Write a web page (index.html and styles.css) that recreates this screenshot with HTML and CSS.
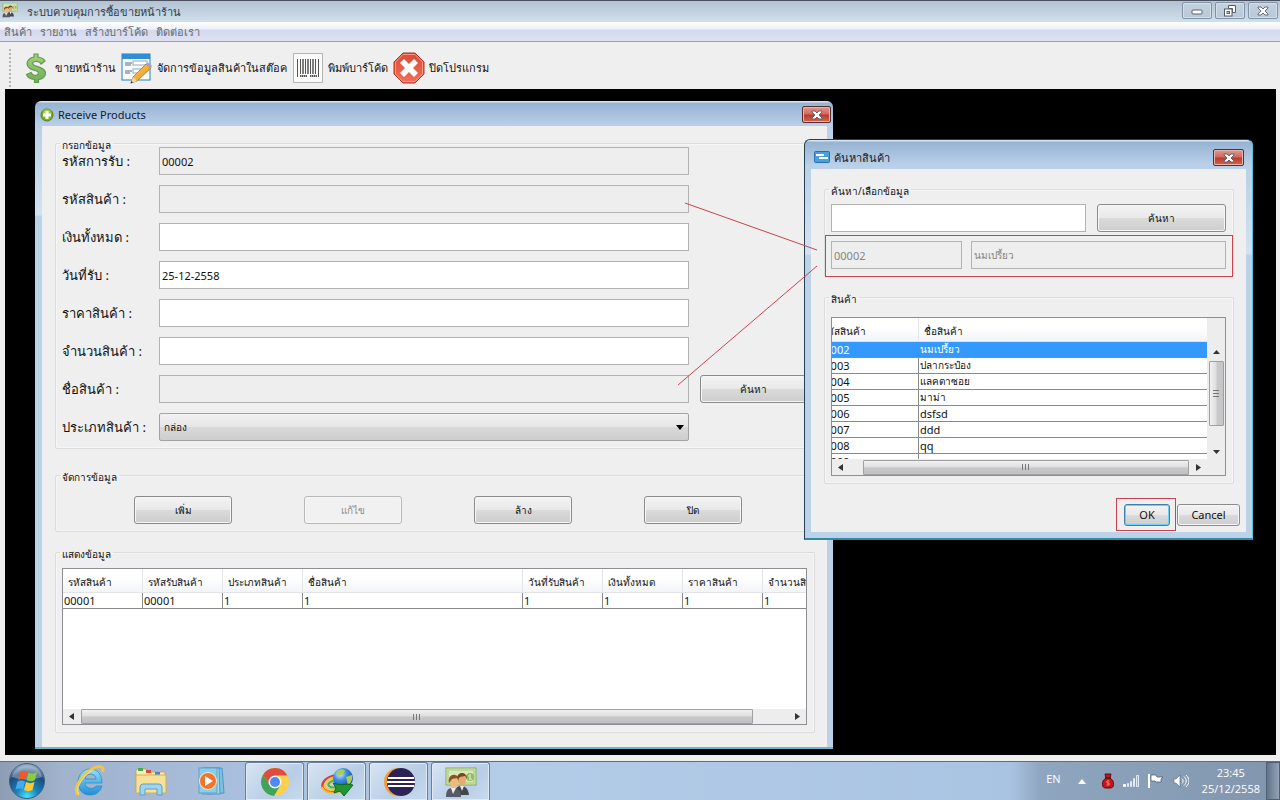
FILE: index.html
```html
<!DOCTYPE html>
<html lang="th">
<head>
<meta charset="utf-8">
<title>ระบบควบคุมการซื้อขายหน้าร้าน</title>
<link rel="stylesheet" href="styles.css">
</head>
<body>
<svg class="defs" aria-hidden="true">
  <defs>
    <linearGradient id="gGreen" x1="0" y1="0" x2="0" y2="1"><stop offset="0" stop-color="#a5cf7c"/><stop offset="1" stop-color="#6fae5b"/></linearGradient>
    <linearGradient id="gRed" x1="0" y1="0" x2="0" y2="1"><stop offset="0" stop-color="#dc4a36"/><stop offset="1" stop-color="#f0705a"/></linearGradient>
    <linearGradient id="gPencil" x1="0" y1="0" x2="1" y2="1"><stop offset="0" stop-color="#ffd35a"/><stop offset="1" stop-color="#e08e1c"/></linearGradient>
    <radialGradient id="gOrb" cx=".5" cy=".95" r=".9"><stop offset="0" stop-color="#4fe3fb"/><stop offset=".35" stop-color="#1785bd"/><stop offset=".75" stop-color="#1d4a78"/><stop offset="1" stop-color="#8fa9c4"/></radialGradient>
    <radialGradient id="gGlobe" cx=".35" cy=".3" r=".8"><stop offset="0" stop-color="#d8efff"/><stop offset=".4" stop-color="#3f8fe0"/><stop offset="1" stop-color="#123f94"/></radialGradient>
    <linearGradient id="gFolder" x1="0" y1="0" x2="0" y2="1"><stop offset="0" stop-color="#fbf3c0"/><stop offset="1" stop-color="#edcf78"/></linearGradient>
    <linearGradient id="gIe" x1="0" y1="0" x2="0" y2="1"><stop offset="0" stop-color="#8fe0fb"/><stop offset="1" stop-color="#1e8fd6"/></linearGradient>
    <symbol id="people" viewBox="0 0 32 30">
      <rect x="1" y="1" width="30" height="17" fill="#d9e8b8" stroke="#86ac5b"/>
      <rect x="3" y="3" width="26" height="13" fill="none" stroke="#a6c77b"/>
      <circle cx="25" cy="10" r="4" fill="#8fbb62"/><path d="M25 7v6M23 9h3M24 12h3" stroke="#dcecc0" fill="none"/>
      <path d="M10 28c0-7 2-9 6-9s7 2 8 9z" fill="#42464f"/><path d="M15 19l2 5 2-5z" fill="#e9e9ee"/>
      <ellipse cx="17" cy="13" rx="4" ry="6" fill="#e3ad72"/><path d="M12 13c-1-9 10-9 10-1l-2-3-5 1z" fill="#7b471d"/>
      <path d="M1 30c0-8 3-9 7-9s8 1 8 9z" fill="#555a64"/><path d="M6 21l2 6 3-6z" fill="#eee"/>
      <ellipse cx="9" cy="15" rx="4" ry="6" fill="#edba80"/><path d="M4 16c-2-10 10-11 10-2l-2-3-5 1z" fill="#8a5222"/>
    </symbol>
    <symbol id="cross" viewBox="0 0 12 10"><path d="M1 1h3l2 2 2-2h3v1L8 5l3 3v1H8L6 7 4 9H1V8l3-3-3-3z" fill="#fff" stroke="#565e6c" stroke-width=".9"/></symbol>
  </defs>
</svg>

<div class="app">
  <header class="titlebar">
    <svg class="titlebar-icon" viewBox="0 0 32 30"><use href="#people"/></svg>
    <h1 class="titlebar-text">ระบบควบคุมการซื้อขายหน้าร้าน</h1>
    <button class="caption" type="button" aria-label="Minimize"><svg width="12" height="10" viewBox="0 0 12 10"><rect x="1" y="4" width="10" height="4" rx="1" fill="#fff" stroke="#565e6c"/></svg></button>
    <button class="caption" type="button" aria-label="Restore"><svg width="12" height="12" viewBox="0 0 12 12"><path d="M4.500.5h7v7h-3v-4h-4z" fill="#fff" stroke="#565e6c"/><rect x=".5" y="4" width="7.500" height="7" fill="#fff" stroke="#565e6c"/><rect x="3" y="6.500" width="2.500" height="2" fill="#b6c8da" stroke="#565e6c"/></svg></button>
    <button class="caption" type="button" aria-label="Close"><svg width="12" height="10"><use href="#cross"/></svg></button>
  </header>

  <nav class="menubar">
    <a href="#">สินค้า</a><a href="#">รายงาน</a><a href="#">สร้างบาร์โค้ด</a><a href="#">ติดต่อเรา</a>
  </nav>

  <div class="toolbar" role="toolbar">
    <span class="grip"></span>
    <button class="tool" type="button">
      <svg width="30" height="32" viewBox="0 0 30 32"><path d="M13 2h4v3c3 .5 6 2 7 4l-4 3c-1-2-4-3-6-2.500-3 .5-3 3-.5 4 4 1.500 11 2.500 11 8 0 3-3 5.500-7 6v3h-4v-3c-4-.5-7-2-8-5l4.500-2c1 2.500 4 3.500 6 2.500 2.500-1 1.500-3.500-.5-4C11 17.500 6 16.500 6 11.500c0-3 3-6 7-6.500z" fill="url(#gGreen)" stroke="#5f9a4f" stroke-width="1.200"/></svg>
      <span>ขายหน้าร้าน</span>
    </button>
    <button class="tool" type="button">
      <svg width="32" height="32" viewBox="0 0 32 32"><rect x="1" y="2" width="28" height="26" fill="#f7fafc" stroke="#2b7fbd"/><path d="M1 2h28v5H1z" fill="#2f8fd4"/><path d="M4 11h7M4 13h6M4 19h7M4 21h5" stroke="#5b6b80"/><rect x="12" y="9" width="14" height="4" fill="#fff" stroke="#9aa6b2"/><rect x="12" y="17" width="8" height="4" fill="#fff" stroke="#9aa6b2"/><path d="M25 12l5 4-14 13-6 2 2-6z" fill="url(#gPencil)" stroke="#a8742c" stroke-width=".8"/><path d="M25 12l2-1.500 4 3.500-1 2z" fill="#a99ad8"/><path d="M12 25l4 4-6 2z" fill="#f0d9b0"/><path d="M10.500 29l1.500 1.500-2.500 1z" fill="#333"/></svg>
      <span>จัดการข้อมูลสินค้าในสต๊อค</span>
    </button>
    <button class="tool" type="button">
      <svg width="32" height="32" viewBox="0 0 32 32"><rect x="1.500" y="1.500" width="29" height="29" fill="#fafafa" stroke="#b4b4b4"/><path d="M5.500 7v18M8.500 7v15M13.500 7v15M18.500 7v15M23.500 7v15M26.500 7v18" stroke="#555"/><path d="M11 7v15M16 7v15M21 7v15" stroke="#555" stroke-width="1.500"/><path d="M8 24h7M18 24h7" stroke="#555" stroke-width="2" stroke-dasharray="1.500 .5"/></svg>
      <span>พิมพ์บาร์โค้ด</span>
    </button>
    <button class="tool" type="button">
      <svg width="32" height="32" viewBox="0 0 32 32"><path d="M10 1h12l9 9v12l-9 9H10l-9-9V10z" fill="url(#gRed)" stroke="#b9301f"/><path d="M10 2.500h12l7.500 7.500v12L22 29.500H10L2.500 22V10z" fill="none" stroke="#f29a8a"/><path d="M11 7l5 5 5-5 4 4-5 5 5 5-4 4-5-5-5 5-4-4 5-5-5-5z" fill="#fff"/></svg>
      <span>ปิดโปรแกรม</span>
    </button>
  </div>

  <main class="desktop">
    <section class="window window-receive">
      <header class="window-title">
        <svg width="14" height="14" viewBox="0 0 14 14"><circle cx="7" cy="7" r="6" fill="#79b51c" stroke="#557f12"/><circle cx="7" cy="5" r="4" fill="#b3dc52" opacity=".6"/><path d="M5.500 3h3v2.500H11v3H8.500V11h-3V8.500H3v-3h2.500z" fill="#fff"/></svg>
        <h2>Receive Products</h2>
        <button class="close" type="button" aria-label="Close"><svg width="12" height="10"><use href="#cross"/></svg></button>
      </header>
      <div class="window-body">
        <fieldset class="group">
          <legend>กรอกข้อมูล</legend>
          <div class="form">
            <label for="f1">รหัสการรับ :</label><input id="f1" class="field" value="00002" readonly>
            <label for="f2">รหัสสินค้า :</label><input id="f2" class="field" readonly>
            <label for="f3">เงินทั้งหมด :</label><input id="f3" class="field">
            <label for="f4">วันที่รับ :</label><input id="f4" class="field" value="25-12-2558">
            <label for="f5">ราคาสินค้า :</label><input id="f5" class="field">
            <label for="f6">จำนวนสินค้า :</label><input id="f6" class="field">
            <label for="f7">ชื่อสินค้า :</label><input id="f7" class="field" readonly><button class="btn" type="button">ค้นหา</button>
            <label for="f8">ประเภทสินค้า :</label>
            <div class="combo"><select id="f8"><option>กล่อง</option></select><svg width="8" height="5" viewBox="0 0 8 5"><path d="M0 0h8L4 5z"/></svg></div>
          </div>
        </fieldset>
        <fieldset class="group group-actions">
          <legend>จัดการข้อมูล</legend>
          <div class="actions">
            <button class="btn" type="button">เพิ่ม</button>
            <button class="btn" type="button" disabled>แก้ไข</button>
            <button class="btn" type="button">ล้าง</button>
            <button class="btn" type="button">ปิด</button>
          </div>
        </fieldset>
        <fieldset class="group group-list">
          <legend>แสดงข้อมูล</legend>
          <div class="listbox list-received">
            <div class="viewport">
              <table class="grid grid-received">
                <colgroup><col class="c80"><col class="c80"><col class="c80"><col class="c220"><col class="c80"><col class="c80"><col class="c80"><col class="c80"></colgroup>
                <thead><tr><th>รหัสสินค้า</th><th>รหัสรับสินค้า</th><th>ประเภทสินค้า</th><th>ชื่อสินค้า</th><th>วันที่รับสินค้า</th><th>เงินทั้งหมด</th><th>ราคาสินค้า</th><th>จำนวนสินค้า</th></tr></thead>
                <tbody><tr><td>00001</td><td>00001</td><td>1</td><td>1</td><td>1</td><td>1</td><td>1</td><td>1</td></tr></tbody>
              </table>
            </div>
            <div class="hbar"><svg width="5" height="7" viewBox="0 0 5 7"><path d="M5 0v7L0 3.500z"/></svg><span class="thumb thumb-received"></span><svg width="5" height="7" viewBox="0 0 5 7"><path d="M0 0v7l5-3.500z"/></svg></div>
          </div>
        </fieldset>
      </div>
    </section>

    <section class="window window-search">
      <header class="window-title">
        <svg width="16" height="13" viewBox="0 0 16 13"><rect x=".5" y=".5" width="15" height="11" rx="1" fill="#4aa0dc" stroke="#2470ae"/><path d="M2 4h8M5 7h9" stroke="#fff" stroke-width="2"/></svg>
        <h2>ค้นหาสินค้า</h2>
        <button class="close" type="button" aria-label="Close"><svg width="12" height="10"><use href="#cross"/></svg></button>
      </header>
      <div class="window-body">
        <fieldset class="group group-find">
          <legend>ค้นหา/เลือกข้อมูล</legend>
          <div class="find-row"><input class="field" aria-label="ค้นหา/เลือกข้อมูล"><button class="btn" type="button">ค้นหา</button></div>
          <div class="found-row"><input class="field" value="00002" aria-label="รหัสสินค้า" disabled><input class="field field-thai" value="นมเปรี้ยว" aria-label="ชื่อสินค้า" disabled></div>
        </fieldset>
        <fieldset class="group group-products">
          <legend>สินค้า</legend>
          <div class="listbox list-products">
            <div class="viewport">
              <table class="grid grid-products">
                <colgroup><col class="c102"><col></colgroup>
                <thead><tr><th>รหัสสินค้า</th><th>ชื่อสินค้า</th></tr></thead>
                <tbody>
                  <tr class="selected"><td>00002</td><td lang="th">นมเปรี้ยว</td></tr>
                  <tr><td>00003</td><td lang="th">ปลากระป๋อง</td></tr>
                  <tr><td>00004</td><td lang="th">แลคตาซอย</td></tr>
                  <tr><td>00005</td><td lang="th">มาม่า</td></tr>
                  <tr><td>00006</td><td>dsfsd</td></tr>
                  <tr><td>00007</td><td>ddd</td></tr>
                  <tr><td>00008</td><td>qq</td></tr>
                  <tr><td>00009</td><td></td></tr>
                </tbody>
              </table>
            </div>
            <div class="vbar"><svg width="7" height="4" viewBox="0 0 7 4"><path d="M0 4h7L3.500 0z"/></svg><span class="vthumb"></span><svg width="7" height="4" viewBox="0 0 7 4"><path d="M0 0h7L3.500 4z"/></svg></div>
            <div class="hbar"><svg width="5" height="7" viewBox="0 0 5 7"><path d="M5 0v7L0 3.500z"/></svg><span class="thumb thumb-products"></span><svg width="5" height="7" viewBox="0 0 5 7"><path d="M0 0v7l5-3.500z"/></svg></div>
          </div>
        </fieldset>
        <div class="dialog-buttons"><button class="btn btn-ok" type="button">OK</button><button class="btn btn-cancel" type="button">Cancel</button></div>
      </div>
    </section>

    <svg class="marks" width="1271" height="666" viewBox="5 89 1271 666" fill="none" stroke="#c8434f" aria-hidden="true">
      <path d="M685 203L817 250M678 385L817 266"/>
      <rect x="825.500" y="235.500" width="407" height="41"/>
      <rect x="1116.500" y="498.500" width="59" height="32"/>
    </svg>
  </main>

  <footer class="taskbar">
    <button class="start" type="button" aria-label="Start">
      <svg width="38" height="38" viewBox="0 0 38 38"><circle cx="19" cy="19" r="17.500" fill="url(#gOrb)" stroke="#3d5f80"/><path d="M4 15C7 0 31 0 34 15c-9 3-21 3-30 0z" fill="#fff" opacity=".3"/><path d="M12 10c3-2 5-1.500 7.500 0l-2 8c-2.500-1.500-4.500-1.500-7.500 0z" fill="#f0592b"/><path d="M20.500 10.500c3 1.500 5 1.500 8.500-.5l-2 8c-3 2-5.500 1.500-8.500 0z" fill="#8ecb3c"/><path d="M9.500 19.500c3-1.500 5-1.500 7.500 0l-2 8c-2.500-1.500-4.500-1.500-7.500 0z" fill="#45a9ea"/><path d="M18 20c3 1.500 5.500 1.500 8.500 0l-2 8c-3 1.500-5.500 1.500-8.500 0z" fill="#fdc830"/></svg>
    </button>
    <button class="pinned" type="button" aria-label="Internet Explorer">
      <svg width="32" height="32" viewBox="0 0 32 32"><path fill-rule="evenodd" d="M16 4c8 0 12 6 12 14H11c0 6 9 7 11 3h6c-2 6-6 9-12 9-8 0-12-6-12-13S9 4 16 4zM11 14h11c0-6-10-7-11 0z" fill="url(#gIe)" stroke="#2786c2" stroke-width=".7"/><path d="M5 30C-3 26 8 9 18 4c6-3.500 12-4 11 3" fill="none" stroke="#f2c83a" stroke-width="2.800"/><path d="M5 29C0 24 10 10 18 5.500" fill="none" stroke="#fff0a0" stroke-width=".8"/></svg>
    </button>
    <button class="pinned" type="button" aria-label="Explorer">
      <svg width="34" height="30" viewBox="0 0 34 30"><path d="M3 3h9l2 3h17v20H2V4z" fill="url(#gFolder)" stroke="#c9a54f"/><rect x="4" y="2" width="5" height="3" fill="#4ea84c"/><rect x="12" y="4" width="5" height="3" fill="#dc4c35"/><rect x="21" y="6" width="5" height="3" fill="#3c8ed4"/><path d="M2 9h30v18H2z" fill="#f6e199" stroke="#d3ad56"/><path d="M6 29v-7c0-3 1-4 4-4h14c3 0 4 1 4 4v7h-5v-6H11v6z" fill="#9fd4ee" stroke="#5c9fc8"/></svg>
    </button>
    <button class="pinned" type="button" aria-label="Media Player">
      <svg width="30" height="30" viewBox="0 0 30 30"><path d="M8 2h17l2 25-17 1z" fill="#7cc2e4" stroke="#4c97c0"/><path d="M5 2h17l1 26H5z" fill="#a5dbf0" stroke="#4c97c0"/><rect x="2" y="2" width="18" height="25" fill="#8ecbe8" stroke="#5aa3c9"/><circle cx="11" cy="15" r="8.500" fill="#f0752a" stroke="#fff" stroke-width=".8"/><path d="M8 10l8 5-8 5z" fill="#fff"/></svg>
    </button>
    <button class="task" type="button" aria-label="Chrome">
      <svg width="30" height="30" viewBox="0 0 30 30"><circle cx="15" cy="15" r="14" fill="#fcd04b"/><path d="M15 15L2.900 8A14 14 0 0 1 27.500 8.500L15 8.500z" fill="#df4b3d"/><path d="M2.900 8A14 14 0 0 0 14 29l6.500-11L15 15 9.500 18z" fill="#3fa45b"/><path d="M2.900 8L9.500 18 15 8.500z" fill="#df4b3d"/><circle cx="15" cy="15" r="6.500" fill="#f4f6fa"/><circle cx="15" cy="15" r="5" fill="#4b8bf2"/></svg>
    </button>
    <button class="task" type="button" aria-label="Download Manager">
      <svg width="34" height="30" viewBox="0 0 34 30"><g fill="none" stroke-width="2.200"><path d="M16 8C4 10 0 18 4 22s12 3 16 1" stroke="#dc3b30"/><path d="M17 10C7 12 3 18 6 21s10 2 13 0" stroke="#f6c72d"/><path d="M18 12c-8 2-11 5-9 7s7 2 9 0" stroke="#4fb447"/></g><path d="M2 20c4 8 16 6 22 3" fill="none" stroke="#f2b62f" stroke-width="2"/><circle cx="23" cy="11" r="10" fill="url(#gGlobe)"/><path d="M16 6c3-4 7-4 9-3l-2 4-4 2zM26 10l6-2c1 4-1 8-4 10z" fill="#a9cf4f"/><path d="M13 16c6 2 10 2 14 1l6 1-9 11-4-5-6 2 2-5z" fill="#1f9632" stroke="#0e6a1d"/></svg>
    </button>
    <button class="task" type="button" aria-label="Eclipse">
      <svg width="32" height="30" viewBox="0 0 32 30"><path d="M15 1A14 14 0 0 0 15 29L10 15z" fill="#f29b38"/><circle cx="18" cy="15" r="14" fill="#2c2255"/><path d="M5 11h26M4 15h28M5 19h26" stroke="#fff" stroke-width="2"/></svg>
    </button>
    <button class="task" type="button" aria-label="Shop"><svg width="32" height="30"><use href="#people"/></svg></button>
    <div class="tray">
      <span class="tray-lang">EN</span>
      <svg width="8" height="5" viewBox="0 0 8 5"><path d="M0 5l4-5 4 5z" fill="#fff"/></svg>
      <svg class="tray-bag" width="12" height="16" viewBox="0 0 12 16"><path d="M3 1h6L8 5c5 3 5 10 0 10H4c-5 0-5-7 0-10z" fill="#c4141c" stroke="#5c0b0e"/><path d="M3 5h6" stroke="#4b0a0c"/><path d="M7.500 8H5v2h2v2H4.500" fill="none" stroke="#ff8a80"/></svg>
      <svg class="tray-signal" width="16" height="12" viewBox="0 0 16 12"><path d="M.5 9.500h2v2h-2z" fill="#fff" stroke="#fff"/><path d="M4.500 8.500h1v3h-1zM7.500 6.500h1v5h-1zM10.500 3.500h1v8h-1zM13.500.5h2v11h-2z" fill="#9fb0c4" stroke="#e3ebf3"/></svg>
      <svg width="16" height="16" viewBox="0 0 16 16"><path d="M1 1v14" stroke="#fff" stroke-width="2"/><path d="M3 2h5l1 2h6l-2 2v3H8L7 8H3z" fill="#fff" stroke="#45566a" stroke-width=".7"/></svg>
      <svg width="16" height="14" viewBox="0 0 16 14"><path d="M1 5h2l4-4v12L3 9H1z" fill="#fff" stroke="#56687c" stroke-width=".6"/><path d="M9 4.500c1.500 1.500 1.500 3.500 0 5M11 2.500c3 3 3 6 0 9M13 1c4 4 4 8 0 12" fill="none" stroke="#fff"/></svg>
      <div class="clock"><span>23:45</span><span>25/12/2558</span></div>
    </div>
    <button class="show-desktop" type="button" aria-label="Show desktop"></button>
  </footer>
</div>
</body>
</html>
```

FILE: styles.css
```css
* { box-sizing: border-box; }
body { margin: 0; background: #efefef; color: #111; font: 11px/14px "Noto Sans", "Open Sans", "DejaVu Sans", sans-serif; }
button, input, select { font: inherit; color: inherit; margin: 0; }
button { padding: 0; border: 0; background: none; white-space: nowrap; }
h1, h2 { margin: 0; font-weight: 400; }
svg { display: block; flex: none; }
.defs { position: absolute; width: 0; height: 0; }
.app { display: flex; flex-direction: column; min-height: 100vh; }

.titlebar { display: flex; align-items: flex-start; gap: 3px; height: 22px; padding: 1px 2px 0; border-top: 1px solid #4a505e; background: linear-gradient(#b3c3d2, #cfdfeb); }
.titlebar-icon { width: 16px; height: 16px; }
.titlebar-text { flex: 1; padding-left: 6px; font-size: 11px; line-height: 20px; color: #333c48; }
.caption { display: grid; place-items: center; width: 30px; height: 17px; border: 1px solid #7f92a8; border-radius: 2px; background: linear-gradient(#c4d2df, #b8c8d8); box-shadow: inset 0 0 0 1px #d3dfe9; }

.menubar { display: flex; gap: 8px; height: 20px; padding: 0 4px; border-bottom: 1px solid #9fa3b0; background: linear-gradient(#fff, #eef1fa 35%, #d4daee 45%, #dde1f2); }
.menubar a { color: #666a72; font-size: 11px; line-height: 20px; text-decoration: none; }

.toolbar { display: flex; align-items: center; gap: 5px; height: 47px; padding: 4px 9px 0; }
.grip { width: 2px; height: 38px; margin-right: 5px; background: repeating-linear-gradient(#b4b4b4 0 2px, transparent 2px 4px); }
.tool { display: flex; align-items: center; gap: 4px; font-size: 11px; }

.desktop { position: relative; flex: 1; min-height: 666px; margin: 0 4px 6px 5px; background: #000; overflow: hidden; }
.marks { position: absolute; left: 0; top: 0; pointer-events: none; }

.window { position: absolute; padding: 0 6px; border: 1px solid #5e7590; border-radius: 6px 6px 0 0; background: linear-gradient(#d6e4f2 0 1px, #96b3d3 2px, #b9d0e8 25px, #d3e2f3 114px, #bbd2e9 115px); }
.window-receive { left: 30px; top: 12px; width: 798px; border: 0 solid #6fb6c4; border-bottom-width: 2px; padding: 0 6px 0 7px; }
.window-search { left: 799px; top: 50px; width: 449px; padding-bottom: 6px; border-color: #27404f; border-right-color: #58c4dc; border-bottom: 2px solid #2e8ca4; }
.window-title { display: flex; align-items: center; gap: 4px; height: 25px; }
.window-title h2 { flex: 1; font-size: 11px; line-height: 18px; color: #14202e; }
.window-receive .window-title { margin: 0 -4px 0 -2px; padding-top: 2px; }
.window-search .window-title { height: 29px; padding: 6px 2px 0 3px; }
.close { display: grid; place-items: center; width: 31px; height: 17px; border: 1px solid #5b2b31; border-radius: 2px; background: linear-gradient(#dd9a90, #cf6a5c 48%, #b93a2a 52%, #cf6553); box-shadow: inset 0 0 0 1px #e9b3ab; }
.window-receive .close { width: 29px; }
.window-body { background: #efefef; }
.window-receive .window-body { padding: 13px 12px 14px 13px; }
.window-search .window-body { padding: 16px 12px 6px 13px; }

.group { min-width: 0; margin: 0; padding: 0 7px 7px 6px; border: 1px solid #dcdcdc; border-radius: 2px; box-shadow: inset 0 0 0 1px #f6f6f6; }
.group legend { height: 8px; padding: 0 2px; margin-left: -2px; font-size: 10px; line-height: 12px; }
.group-actions { margin-top: 22px; padding-top: 17px; }
.group-list { margin-top: 16px; padding-top: 12px; }
.group-find { padding-top: 11px; }
.group-products { margin-top: 16px; padding-top: 16px; }

.form { display: grid; grid-template-columns: 97px 530px 106px; column-gap: 0; row-gap: 10px; }
.form label { grid-column: 1; align-self: center; font-size: 13px; line-height: 20px; white-space: nowrap; }
.form .btn { margin-left: 11px; margin-right: -11px; }
.field { width: 100%; min-width: 0; height: 28px; padding: 0 2px; border: 1px solid #b2b2b2; border-radius: 0; background: #fff; outline: 0; }
.field:read-only, .field:disabled { background: #eee; }
.field:disabled { color: #858585; }
.field-thai { font-size: 10px; }
.combo { display: grid; align-items: center; }
.combo select { grid-area: 1 / 1; width: 100%; height: 28px; padding: 0 4px; appearance: none; border: 1px solid #a2a2a2; border-radius: 2px; background: linear-gradient(#f2f2f2, #e6e6e6 48%, #d9d9d9 52%, #cdcdcd); font-size: 10px; }
.combo svg { grid-area: 1 / 1; justify-self: end; margin-right: 5px; pointer-events: none; }

.btn { height: 28px; border: 1px solid #8b8b8b; border-radius: 3px; background: linear-gradient(#f3f3f3, #e9e9e9 48%, #dadada 52%, #cdcdcd); box-shadow: inset 0 0 0 1px #f6f6f6; font-size: 10px; }
.btn:disabled { color: #8c8c8c; border-color: #b8b8b8; background: #f1f1f1; }
.actions { display: grid; grid-template-columns: repeat(4, 98px); gap: 72px; padding-left: 72px; }

.listbox { display: grid; border: 1px solid #8c8f94; background: #fff; }
.list-received { grid-template: 140px 15px / 1fr; }
.list-products { grid-template: 141px 16px / 1fr 18px; }
.viewport { min-width: 0; overflow: hidden; }
.grid { table-layout: fixed; border-collapse: separate; border-spacing: 0; }
.grid-received { width: 780px; }
.grid-products { width: 391px; margin-left: -15px; }
.c80 { width: 80px; }
.c220 { width: 220px; }
.c102 { width: 102px; }
.grid th { height: 24px; padding: 3px 5px 0; border-right: 1px solid #e3e5e8; border-bottom: 1px solid #e0e3e8; background: linear-gradient(#fff 40%, #f2f4f7); font-size: 10px; font-weight: 400; line-height: 14px; text-align: left; white-space: nowrap; overflow: hidden; }
.grid td { height: 16px; padding: 0 1px; border-right: 1px solid #8a8a8a; border-bottom: 1px solid #8a8a8a; line-height: 15px; white-space: nowrap; overflow: hidden; }
.grid td:lang(th)[lang] { font-size: 10px; }
.selected td { background: #3399ff; color: #fff; border-right-color: #3399ff; }

.hbar { display: flex; align-items: center; gap: 7px; padding: 0 6px; background: #ededed; fill: #333; }
.hbar svg:last-child { margin-left: auto; }
.thumb, .vthumb { border: 1px solid #a0a0a4; border-radius: 1px; }
.thumb { height: 15px; background: repeating-linear-gradient(90deg, #777 0 1px, transparent 1px 3px) center / 8px 6px no-repeat, linear-gradient(#f1f1f1, #dedede 48%, #c9c9cb 52%, #c0c0c3); }
.thumb-received { flex: 0 1 672px; }
.thumb-products { flex: 0 1 326px; margin-left: 13px; }
.vbar { grid-row: 1 / 3; grid-column: 2; display: flex; flex-direction: column; align-items: center; gap: 7px; padding: 32px 1px 0; background: #ededed; fill: #333; }
.vbar svg:last-child { margin-top: 17px; }
.vthumb { width: 15px; height: 65px; background: repeating-linear-gradient(#777 0 1px, transparent 1px 3px) center / 6px 8px no-repeat, linear-gradient(90deg, #f1f1f1, #dedede 48%, #c9c9cb 52%, #c6c6c9); }

.find-row { display: grid; grid-template-columns: 255px 1fr; gap: 11px; }
.found-row { display: grid; grid-template-columns: 131px 1fr; gap: 9px; margin-top: 9px; }
.dialog-buttons { display: flex; justify-content: flex-end; gap: 7px; margin: 20px -6px 0 0; }
.dialog-buttons .btn { height: 22px; font-size: 11px; }
.btn-ok { width: 46px; border-color: #3c7fb1; box-shadow: inset 0 0 0 1px #6fd0ee; }
.btn-cancel { width: 63px; }

.taskbar { display: flex; align-items: stretch; height: 39px; border-top: 1px solid #5b6f86; background: linear-gradient(90deg, #8d9db3, #a0b2cc 60px, #a9bfdd 240px, #b3cce8 500px, #a9c4e2 1010px, #8fa6c0 1040px, #8195ad); color: #fff; font: 11px/16px "Open Sans", "Noto Sans", sans-serif; }
.start { display: grid; place-items: center; width: 54px; }
.pinned { display: grid; place-items: center; width: 61px; }
.pinned:nth-child(2) { margin-left: 5px; }
.pinned + .task { margin-left: 3px; }
.task { display: grid; place-items: center; width: 59px; margin-right: 3px; border: 1px solid #68809c; border-bottom: 0; border-radius: 3px 3px 0 0; background: linear-gradient(135deg, #d8e5f3, #b8cde6 60%, #c7dbee); box-shadow: inset 0 0 0 1px #dfeaf5; }
.tray { display: flex; align-items: center; gap: 9px; margin-left: auto; padding-right: 6px; }
.tray-lang { margin: 0 8px 4px 0; }
.tray-bag { margin-left: 7px; }
.clock { display: flex; flex-direction: column; align-items: center; margin-left: 4px; }
.show-desktop { width: 14px; border: 1px solid #4f6177; background: linear-gradient(90deg, #62748a, #93a3b6); }
```
